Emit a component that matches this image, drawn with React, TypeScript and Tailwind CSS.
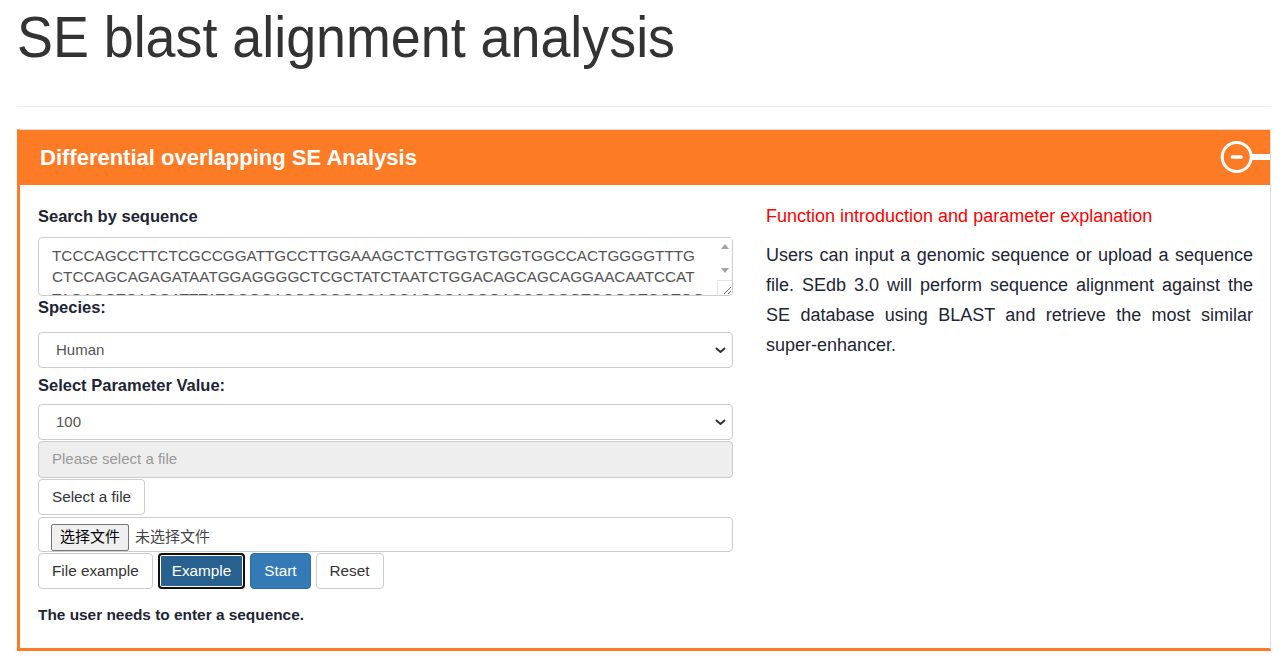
import React from "react";

const SEQ =
  "TCCCAGCCTTCTCGCCGGATTGCCTTGGAAAGCTCTTGGTGTGGTGGCCACTGGGGTTTG\nCTCCAGCAGAGATAATGGAGGGGCTCGCTATCTAATCTGGACAGCAGCAGGAACAATCCAT\nTAGAGGTCAGGATTTATGGGGACGGGGGGCAGCAGGCAGGGAGCGGGGTGGGGTGGTGGA\nGGCAGCTCCAGGCTGGGAGGTCTAAGGACCCTGTCCTGGGTCTCGGCCAGGAAGGAGTC";

function Chevron() {
  return (
    <svg width="11" height="7" viewBox="0 0 11 7" className="shrink-0">
      <path d="M1.5 1.5 L5.5 5 L9.5 1.5" fill="none" stroke="#333" strokeWidth="2" strokeLinecap="round" strokeLinejoin="round" />
    </svg>
  );
}

function FakeSelect({ value }: { value: string }) {
  return (
    <div className="flex h-[36px] items-center justify-between rounded-[4px] border border-[#ccc] bg-white pl-[17px] pr-[6px] text-[15px] text-[#555]">
      <span>{value}</span>
      <Chevron />
    </div>
  );
}

export default function App() {
  return (
    <div className="min-h-[661px] bg-white font-['Liberation_Sans',Arial,sans-serif]">
      <div className="ml-[17px] w-[1254px]">
        <div className="pt-[6px]">
          <h1 className="inline-block origin-left scale-x-[0.944] whitespace-nowrap text-[57px] font-normal leading-[63px] text-[#333]">
            SE blast alignment analysis
          </h1>
        </div>
        <div className="mt-[37px] h-px bg-[#eee]" />

        <div className="mt-[22px] border-t border-r border-b-[3px] border-l-[3px] border-t-[#ddd] border-r-[#ddd] border-b-[#fe7b26] border-l-[#fe7b26]">
          <div className="flex h-[55px] items-center justify-between bg-[#fe7b26] pl-[20px]">
            <span className="text-[22px] font-bold text-white">Differential overlapping SE Analysis</span>
            <svg width="52" height="55" viewBox="0 0 52 55">
              <circle cx="18.7" cy="27" r="14.5" fill="none" stroke="white" strokeWidth="3" />
              <rect x="33" y="24" width="19" height="6" fill="white" />
              <rect x="12.7" y="25.3" width="12" height="3.5" rx="1.5" fill="white" />
            </svg>
          </div>

          <div className="flex gap-[33px] pb-[23px] pl-[18px] pr-[17px] pt-[20px]">
            <div className="flex w-[695px] flex-col">
              <div className="text-[16.5px] font-bold leading-[22px] text-[#1e2535]">Search by sequence</div>
              <div className="relative mt-[10px] flex">
                <textarea
                  readOnly
                  value={SEQ}
                  className="h-[59px] w-full overflow-hidden rounded-[4px] border border-[#ccc] pl-[13px] pr-[20px] pt-[7px] font-['Liberation_Sans',Arial,sans-serif] text-[15.3px] leading-[21.4px] text-[#555] outline-none"
                />
                <div className="pointer-events-none absolute right-[1px] top-[1px] flex h-[41px] w-[15px] flex-col items-center justify-between bg-white py-[6px]">
                  <svg width="8" height="5" viewBox="0 0 8 5">
                    <path d="M0 5 L4 0 L8 5 Z" fill="#a3a3a3" />
                  </svg>
                  <svg width="8" height="5" viewBox="0 0 8 5">
                    <path d="M0 0 L4 5 L8 0 Z" fill="#a3a3a3" />
                  </svg>
                </div>
                <div className="pointer-events-none absolute bottom-[1px] right-[1px] h-[15px] w-[15px] border-l border-t border-[#e5e5e5]" />
              </div>
              <div className="text-[16.5px] font-bold leading-[22px] text-[#1e2535]">Species:</div>
              <div className="mt-[14px]">
                <FakeSelect value="Human" />
              </div>
              <div className="mt-[6px] text-[16.5px] font-bold leading-[22px] text-[#1e2535]">Select Parameter Value:</div>
              <div className="mt-[8px]">
                <FakeSelect value="100" />
              </div>
              <div className="mt-[1px] flex h-[37px] items-center rounded-[4px] border border-[#ccc] bg-[#eee] pl-[13px] text-[15px] text-[#999]">
                Please select a file
              </div>
              <div className="mt-[1px] flex">
                <button className="h-[36px] rounded-[4px] border border-[#ccc] bg-white px-[13px] text-[15.3px] text-[#333]">
                  Select a file
                </button>
              </div>
              <div className="mt-[2px] flex h-[35px] items-start gap-[6px] rounded-[4px] border border-[#ccc] pl-[12px] pt-[6px] font-['Liberation_Sans','Noto_Sans_CJK_SC',sans-serif] text-[15px]">
                <span className="flex h-[27px] items-center rounded-[2px] border border-[#767676] bg-[#efefef] px-[8px] text-black">
                  选择文件
                </span>
                <span className="flex h-[27px] items-center text-[#444]">未选择文件</span>
              </div>
              <div className="mt-[1px] flex h-[36px] gap-[5px]">
                <button className="rounded-[4px] border border-[#ccc] bg-white px-[13px] text-[15.3px] text-[#333]">File example</button>
                <button className="rounded-[4px] border-2 border-[#101010] bg-[#286090] px-[12px] text-[15.3px] text-white shadow-[inset_0_0_0_1px_#ffffff]">
                  Example
                </button>
                <button className="rounded-[4px] border border-[#2e6da4] bg-[#337ab7] px-[13px] text-[15.3px] text-white">Start</button>
                <button className="rounded-[4px] border border-[#ccc] bg-white px-[13px] text-[15.3px] text-[#333]">Reset</button>
              </div>
              <div className="mt-[15px] text-[15.4px] font-bold leading-[21px] text-[#1e2535]">The user needs to enter a sequence.</div>
            </div>

            <div className="w-[487px]">
              <div className="text-[18px] leading-[22px] text-[#ff0000]">Function introduction and parameter explanation</div>
              <p className="mt-[13px] text-justify text-[18px] leading-[30px] text-[#1e2535]">
                Users can input a genomic sequence or upload a sequence file. SEdb 3.0 will perform sequence alignment against the SE database using BLAST and retrieve the most similar super-enhancer.
              </p>
            </div>
          </div>
        </div>
      </div>
    </div>
  );
}
